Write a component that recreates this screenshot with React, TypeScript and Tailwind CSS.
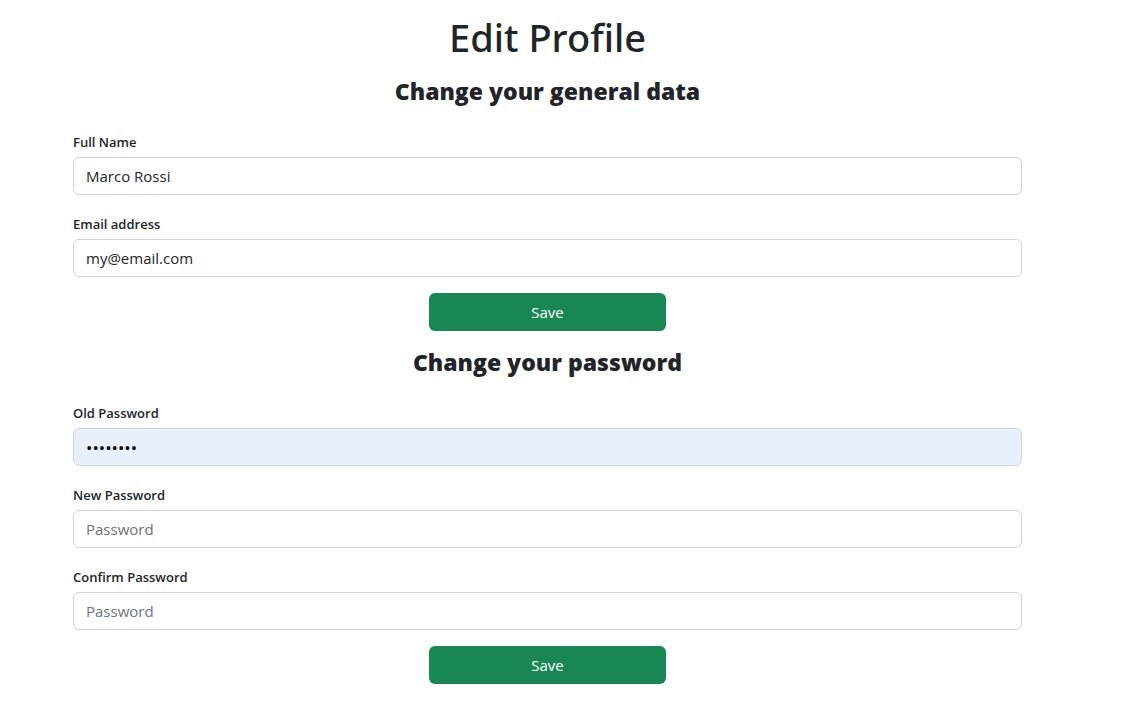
import { useId, type ReactNode } from "react";

type FieldProps = {
  label: string;
  type: string;
  name: string;
  defaultValue?: string;
  placeholder?: string;
  filled?: boolean;
};

function Field({ label, type, name, defaultValue, placeholder, filled }: FieldProps) {
  const id = useId();
  return (
    <div className="flex flex-col gap-[5px]">
      <label htmlFor={id} className="text-[13px] leading-5 font-semibold">
        {label}
      </label>
      <input
        id={id}
        name={name}
        type={type}
        defaultValue={defaultValue}
        placeholder={placeholder}
        className={`h-[38px] w-full rounded-md border border-[#ced4da] px-3 outline-none placeholder:text-[#6c757d] focus:border-[#86b7fe] ${
          filled ? "bg-[#e8f0fe] text-[17px] text-black" : "bg-white text-[15px] text-[#212529]"
        }`}
      />
    </div>
  );
}

function Section({ title, children }: { title: string; children: ReactNode }) {
  return (
    <form className="flex flex-col" onSubmit={(e) => e.preventDefault()}>
      <h2 className="mb-[26px] text-center text-[23px] leading-[30px] font-extrabold">{title}</h2>
      <div className="flex flex-col gap-[19px]">{children}</div>
      <button
        type="submit"
        className="mt-4 h-[38px] w-1/4 self-center rounded-md bg-[#198754] text-[15px] text-white hover:bg-[#157347]"
      >
        Save
      </button>
    </form>
  );
}

export default function App() {
  return (
    <main className="mr-[107px] ml-[73px] pt-2 pb-5 font-['Open_Sans',sans-serif] text-[#212529]">
      <h1 className="mb-[10px] text-center font-['Noto_Sans',sans-serif] text-[38px] leading-[58px] font-medium">
        Edit Profile
      </h1>
      <div className="flex flex-col gap-4">
        <Section title="Change your general data">
          <Field label="Full Name" type="text" name="fullName" defaultValue="Marco Rossi" />
          <Field label="Email address" type="email" name="email" defaultValue="my@email.com" />
        </Section>
        <Section title="Change your password">
          <Field label="Old Password" type="password" name="oldPassword" defaultValue="password" filled />
          <Field label="New Password" type="password" name="newPassword" placeholder="Password" />
          <Field label="Confirm Password" type="password" name="confirmPassword" placeholder="Password" />
        </Section>
      </div>
    </main>
  );
}
